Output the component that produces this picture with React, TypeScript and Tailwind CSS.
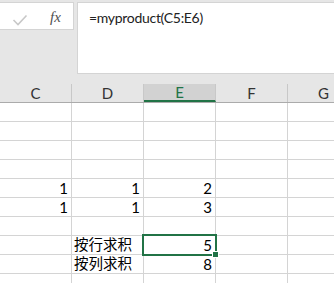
import React from "react";

const cols = ["C", "D", "E", "F", "G"];

type Cell = { text: string; align: "left" | "right" };

const rows: Record<number, Record<string, Cell>> = {
  4: {
    C: { text: "1", align: "right" },
    D: { text: "1", align: "right" },
    E: { text: "2", align: "right" },
  },
  5: {
    C: { text: "1", align: "right" },
    D: { text: "1", align: "right" },
    E: { text: "3", align: "right" },
  },
  7: {
    D: { text: "按行求积", align: "left" },
    E: { text: "5", align: "right" },
  },
  8: {
    D: { text: "按列求积", align: "left" },
    E: { text: "8", align: "right" },
  },
};

const App: React.FC = () => {
  return (
    <div className="relative w-[334px] h-[283px] overflow-hidden bg-[#e6e6e6] font-['Lato','Noto_Sans_CJK_SC',sans-serif] text-black">
      {/* formula bar */}
      <div className="flex h-[74px] pt-[2px]">
        <div className="relative w-[74px] h-[28px] shrink-0 bg-white border border-l-0 border-[#d4d4d4]">
          <svg className="absolute left-[12px] top-[11px]" width="16" height="13" viewBox="0 0 16 13">
            <polyline
              points="1.5,6 6,10.5 14.5,1.5"
              fill="none"
              stroke="#c8c8c8"
              strokeWidth="1.6"
            />
          </svg>
          <span className="absolute left-[50px] top-[3px] font-['Liberation_Serif',serif] italic text-[15px] text-[#505050]">
            fx
          </span>
        </div>
        <div className="ml-[3px] flex-1 h-[72px] bg-white border border-r-0 border-[#d4d4d4] pl-[11px] pt-[6px] text-[14px] tracking-[-0.3px] leading-[18px] text-[#222]">
          =myproduct(C5:E6)
        </div>
      </div>

      <div className="h-[10px]" />

      {/* column header */}
      <div className="flex h-[19px] border-b border-[#ababab]">
        {cols.map((c) => (
          <div
            key={c}
            className={`w-[72px] shrink-0 h-[18px] border-r border-[#c8c8c8] flex items-center justify-center text-[15px] leading-[18px] ${
              c === "E"
                ? "bg-[#d2d2d2] text-[#217346] border-b-2 border-b-[#217346]"
                : "text-[#333]"
            }`}
          >
            {c}
          </div>
        ))}
      </div>

      {/* grid */}
      <div className="bg-white">
        {Array.from({ length: 10 }).map((_, r) => (
          <div key={r} className="flex h-[19px] border-b border-[#d4d4d4]">
            {cols.map((c) => {
              const cell = rows[r]?.[c];
              return (
                <div
                  key={c}
                  className={`w-[72px] shrink-0 h-[18px] border-r border-[#d4d4d4] flex items-center text-[15px] leading-[18px] ${
                    cell?.align === "left" ? "justify-start pl-[2px]" : "justify-end pr-[3px]"
                  }`}
                >
                  {cell && (
                    <span className={cell.align === "left" ? "text-[14.5px]" : ""}>
                      {cell.text}
                    </span>
                  )}
                </div>
              );
            })}
          </div>
        ))}
      </div>

      {/* active cell */}
      <div className="absolute left-[142px] top-[234px] w-[75px] h-[22px] border-2 border-[#217346]" />
      <div className="absolute left-[212px] top-[251px] w-[7px] h-[7px] bg-[#217346] border border-white" />
    </div>
  );
};

export default App;
